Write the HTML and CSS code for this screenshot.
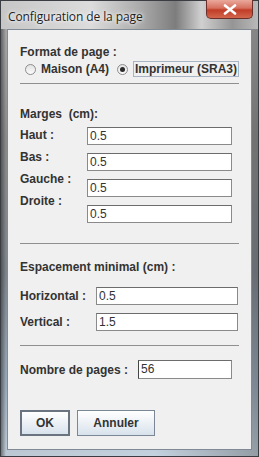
FILE: index.html
```html
<!DOCTYPE html>
<html lang="fr">
<head>
    <meta charset="UTF-8">
    <title>Configuration de la page</title>
    <link rel="stylesheet" href="styles.css">
</head>
<body>
    <div class="window">
        <div class="titlebar">
            <div class="title">Configuration de la page</div>
            <div class="close-btn">
                <svg width="14" height="11" viewBox="0 0 14 11">
                    <path d="M2 1.5 L12 9.5 M12 1.5 L2 9.5" stroke="#fff" stroke-width="2.6" stroke-linecap="round"/>
                </svg>
            </div>
        </div>

        <div class="client">
            <div class="label first">Format de page :</div>
            <div class="radio-row">
                <span class="radio"></span>
                <span class="radio-text">Maison (A4)</span>
                <span class="radio checked"></span>
                <span class="radio-text focused">Imprimeur (SRA3)</span>
            </div>
            <div class="separator sep-1"></div>

            <div class="label marges">Marges&nbsp; (cm):</div>
            <div class="marges-grid">
                <div class="marges-labels">
                    <div class="label">Haut :</div>
                    <div class="label">Bas :</div>
                    <div class="label">Gauche :</div>
                    <div class="label">Droite :</div>
                </div>
                <div class="marges-fields">
                    <div class="field">0.5</div>
                    <div class="field">0.5</div>
                    <div class="field">0.5</div>
                    <div class="field">0.5</div>
                </div>
            </div>
            <div class="separator sep-2"></div>

            <div class="label espacement">Espacement minimal (cm) :</div>
            <div class="row row-h">
                <div class="label row-label">Horizontal :</div>
                <div class="field wide">0.5</div>
            </div>
            <div class="row row-v">
                <div class="label row-label">Vertical :</div>
                <div class="field wide">1.5</div>
            </div>
            <div class="separator sep-3"></div>

            <div class="row row-pages">
                <div class="label pages-label">Nombre de pages :</div>
                <div class="field pages">56</div>
            </div>

            <div class="buttons">
                <button class="btn btn-ok">OK</button>
                <button class="btn">Annuler</button>
            </div>
        </div>
    </div>
</body>
</html>
```

FILE: styles.css
```css
body {
    margin: 0;
    padding: 0;
    width: 259px;
    height: 457px;
    overflow: hidden;
    font-family: "Liberation Sans", Arial, sans-serif;
}

.window {
    width: 259px;
    height: 457px;
    box-sizing: border-box;
    padding: 0 6px 6px 6px;
    border: 1px solid #3a3d42;
    background:
        linear-gradient(90deg, rgba(40,40,40,0.55) 0, rgba(120,120,120,0.1) 5px, rgba(0,0,0,0) 60%, rgba(60,60,60,0.35) 100%),
        linear-gradient(180deg, #b4b4b4 0, #8e8e8e 30%, #7f8790 60%, #9fb0c2 85%, #c4d2df 100%);
    display: flex;
    flex-direction: column;
}

.titlebar {
    height: 28px;
    position: relative;
    background: linear-gradient(90deg, #c6c6c6 0, #dcdcdc 35%, #a8a8a8 55%, #7d7d7d 68%, #d0d0d0 78%, #959595 90%, #b9b9b9 100%);
    margin: 0 -6px;
    padding: 0 6px;
}

.title {
    padding-top: 7px;
    padding-left: 1px;
    font-size: 12px;
    color: #1e1e1e;
    text-shadow: 0 0 6px #fff, 0 0 3px #fff;
    font-family: "Open Sans", "Liberation Sans", sans-serif;
    letter-spacing: -0.1px;
}

.close-btn {
    position: absolute;
    top: -1px;
    right: 5px;
    width: 47px;
    height: 19px;
    box-sizing: border-box;
    border: 1px solid #6d2f2a;
    border-top: none;
    border-radius: 0 0 5px 5px;
    background: linear-gradient(180deg, #e9a99b 0, #d6705e 45%, #c13d27 55%, #d2664d 100%);
    display: flex;
    justify-content: center;
    align-items: center;
}

.client {
    flex: 1;
    background: #f0f0f0;
    border: 1px solid #7f8a96;
    padding: 0 12px 12px 12px;
    color: #333;
}

.label {
    font-size: 12px;
    font-weight: bold;
    line-height: 16px;
    color: #333;
    white-space: nowrap;
}

.label.first {
    margin-top: 14px;
}

.radio-row {
    display: flex;
    align-items: center;
    height: 16px;
    margin-top: 1px;
    font-size: 12px;
    font-weight: bold;
    color: #333;
    white-space: nowrap;
}

.radio {
    flex-shrink: 0;
    width: 11px;
    height: 11px;
    box-sizing: border-box;
    border-radius: 50%;
    border: 1px solid #8d8d8d;
    background: linear-gradient(180deg, #e2e2e2, #fbfbfb);
    margin-left: 5px;
    margin-right: 5px;
    position: relative;
}

.radio.checked {
    margin-left: 8px;
}

.radio.checked::after {
    content: "";
    position: absolute;
    left: 2px;
    top: 2px;
    width: 5px;
    height: 5px;
    border-radius: 50%;
    background: #2a2a2a;
}

.radio-text {
    flex-shrink: 0;
}

.radio-text.focused {
    border: 1px solid #a8b4c4;
    padding: 0 1px;
    line-height: 14px;
}

.separator {
    height: 1px;
    background: #8f8f8f;
}

.sep-1 {
    margin-top: 6px;
}

.label.marges {
    margin-top: 22px;
}

.marges-grid {
    display: flex;
    margin-top: 5px;
}

.marges-labels {
    width: 67px;
    display: flex;
    flex-direction: column;
    gap: 6px;
}

.marges-fields {
    display: flex;
    flex-direction: column;
    gap: 8px;
}

.field {
    width: 145px;
    height: 18px;
    box-sizing: border-box;
    background: #fff;
    border: 1px solid #8a8a8a;
    border-top-color: #6c6c6c;
    font-size: 12px;
    line-height: 17px;
    padding-left: 2px;
    color: #333;
}

.sep-2 {
    margin-top: 20px;
}

.label.espacement {
    margin-top: 15px;
}

.row {
    display: flex;
    align-items: center;
}

.row-h {
    margin-top: 12px;
}

.row-v {
    margin-top: 8px;
}

.row-label {
    width: 76px;
}

.field.wide {
    width: 142px;
}

.sep-3 {
    margin-top: 14px;
}

.row-pages {
    margin-top: 14px;
}

.pages-label {
    width: 118px;
}

.field.pages {
    width: 94px;
    height: 19px;
    border-left-color: #444;
}

.buttons {
    display: flex;
    gap: 7px;
    margin-top: 31px;
}

.btn {
    height: 26px;
    padding: 0;
    font-family: "Liberation Sans", Arial, sans-serif;
    font-size: 12px;
    font-weight: bold;
    color: #333;
    border: 1px solid #7c8796;
    background: linear-gradient(180deg, #ffffff 0, #eef2f6 45%, #d8e2ec 100%);
    width: 78px;
}

.btn-ok {
    width: 50px;
    border: 2px solid #6a7480;
}
```
